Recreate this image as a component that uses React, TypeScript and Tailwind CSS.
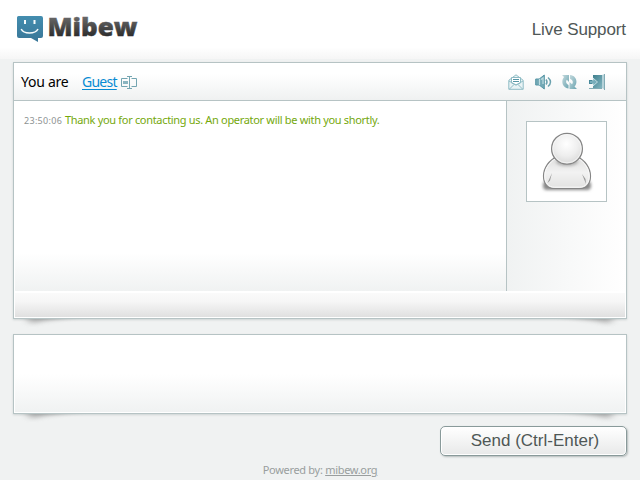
import React from "react";

function Logo() {
  return (
    <svg width="124" height="44" viewBox="0 -10 124 44" className="-mt-[10px] shrink-0">
      <defs>
        <linearGradient id="bubble" x2="0" y2="1">
          <stop stopColor="#438daf" />
          <stop offset="1" stopColor="#397697" />
        </linearGradient>
        <linearGradient id="wordmark" gradientUnits="userSpaceOnUse" x1="0" y1="2" x2="0" y2="22">
          <stop stopColor="#686868" />
          <stop offset="1" stopColor="#2b2b2b" />
        </linearGradient>
      </defs>
      <path d="M2.500 1H25Q27 1 27 3V21Q27 23 25 23H22V27L15 23H3Q1 23 1 21V2.500Q1 1 2.500 1Z" fill="url(#bubble)" />
      <path d="M9 5v4M18.500 5v4" stroke="#f7fbfc" strokeWidth="2" />
      <path d="M5.200 14Q7 18 13.500 18T22 14" fill="none" stroke="#f7fbfc" strokeWidth="1.500" />
      <text
        x="31.500"
        y="20.500"
        textLength="90"
        lengthAdjust="spacingAndGlyphs"
        fill="url(#wordmark)"
        stroke="url(#wordmark)"
        strokeWidth=".4"
        className="font-['Open_Sans','Noto_Sans',sans-serif] text-[24.5px] font-extrabold"
      >
        Mibew
      </text>
    </svg>
  );
}

function RenameIcon() {
  return (
    <svg width="16" height="14" viewBox="0 0 16 14" className="mt-[2px] ml-[4px] shrink-0" fill="none" stroke="#73a5b1">
      <path d="M6.500 2.500H.5v8h6M10.500 2.500h5v8h-5M6 .5h5M6 12.500h5M8.500 .5v12" />
      <path d="M2 6.500h5" stroke="#8ab5c0" strokeWidth="3" />
    </svg>
  );
}

function MailIcon() {
  return (
    <svg width="16" height="16" viewBox="0 0 16 16" fill="none" stroke="#8fbcc5">
      <path d="M.8 6.300L8 .8l7.200 5.500v9H.8z" fill="#e9f3f5" />
      <path d="M3.500 9V3.500h9V9L8 11z" fill="#fff" />
      <path d="M5 5.500h6M5 7.500h6" stroke="#5796a6" />
      <path d="M1 7l7 4 7-4M1.500 15L6 10.500M14.500 15L10 10.500" />
    </svg>
  );
}

function SoundIcon() {
  return (
    <svg width="17" height="16" viewBox="0 0 17 16" fill="none">
      <path d="M.7 5h3.500L9.300 1v14l-5.100-4H.7z" fill="#74a9b6" stroke="#5796a6" />
      <path d="M4.500 5v6M6 5.500l2-1.500v6" stroke="#c0dce1" strokeWidth="1.200" />
      <path d="M11 5.500q2 2.500 0 5M13 3.500q5 4.500 0 9" stroke="#6aa1ae" strokeWidth="1.500" />
    </svg>
  );
}

function RefreshIcon() {
  return (
    <svg width="15" height="16" viewBox="0 0 15 16" className="-ml-px mr-px">
      <defs>
        <linearGradient id="refresh" x2="1" y2="1">
          <stop stopColor="#c5dade" />
          <stop offset="1" stopColor="#6ba4b0" />
        </linearGradient>
      </defs>
      <path d="M0 1H7V8L4.800 5.800C3.500 7.500 4 9.800 6.500 11V14.500C.8 14 -1.500 7.500 2 3z" fill="url(#refresh)" />
      <path d="M8 1C14 1.500 16.500 8 12.500 12.500L15 15H7.500V8L10 10.200C11.500 8.500 11 6 8 4.700z" fill="url(#refresh)" />
    </svg>
  );
}

function ExitIcon() {
  return (
    <svg width="17" height="16" viewBox="0 0 17 16">
      <defs>
        <linearGradient id="door" x2="1" y2="1">
          <stop stopColor="#3f7f8d" />
          <stop offset="1" stopColor="#82b5c0" />
        </linearGradient>
      </defs>
      <path d="M4 1h9v13H4z" fill="url(#door)" />
      <path d="M13 1l3-1v16l-3-2z" fill="#b5d2d9" />
      <path d="M15.500 0v16M0 14.500h13" stroke="#82abb4" />
      <path d="M.5 6.500h3.500V4L8.500 8 4 12V9.500H.5z" fill="#78adba" stroke="#e5f3f5" strokeWidth=".7" />
      <path d="M0 6.500h3.500M0 9.500h3.500M.5 6v4" stroke="#48899a" />
    </svg>
  );
}

function Avatar() {
  return (
    <svg width="54" height="64" viewBox="0 0 54 64">
      <defs>
        <radialGradient id="head" cx=".48" cy=".35" r=".7">
          <stop stopColor="#fff" />
          <stop offset=".55" stopColor="#eee" />
          <stop offset="1" stopColor="#d6d6d5" />
        </radialGradient>
        <linearGradient id="body" x2="0" y2="1">
          <stop stopColor="#dededd" />
          <stop offset=".5" stopColor="#f2f2f2" />
          <stop offset="1" stopColor="#e2e2e1" />
        </linearGradient>
        <filter id="soft" x="-30%" y="-50%" width="160%" height="200%">
          <feGaussianBlur stdDeviation="1.500" />
        </filter>
      </defs>
      <rect x="3" y="50" width="48" height="9" rx="4" fill="#888" filter="url(#soft)" />
      <path d="M17 25.500C9 29 3.500 37 3.500 45c0 7.500 4 12.500 11 12.500h25c7 0 11-5 11-12.500 0-8-5.500-16-13.500-19.500z" fill="url(#body)" stroke="#858585" strokeWidth="1.200" />
      <path d="M16 27.500C9 31.500 4.800 38 4.800 45c0 6.500 3.500 11.200 9.700 11.200h25c6.200 0 9.700-4.700 9.700-11.200 0-7-4.700-14-11.200-17.500" fill="none" stroke="#fafafa" />
      <path d="M7.500 52l4.500-10-2 7.500zM46 53l-4-10 3.500 5z" fill="#999" />
      <ellipse cx="27" cy="31" rx="11" ry="4" fill="#999" opacity=".7" filter="url(#soft)" />
      <circle cx="27" cy="17.700" r="15.400" fill="url(#head)" stroke="#858585" strokeWidth="1.300" />
      <circle cx="27" cy="17.700" r="14.200" fill="none" stroke="#f8f8f8" opacity=".8" />
    </svg>
  );
}

function CornerShadow({ flip = false }: { flip?: boolean }) {
  return (
    <svg width="80" height="12" viewBox="0 0 80 12" className={flip ? "-scale-x-100" : ""}>
      <defs>
        <filter id="fold" x="-30%" y="-100%" width="160%" height="300%">
          <feGaussianBlur stdDeviation="4 2" />
        </filter>
      </defs>
      <path d="M12 -4H72L45 0Q28 2 18 5Z" fill="#777" opacity=".5" filter="url(#fold)" />
    </svg>
  );
}

function Panel({ className, children }: { className: string; children: React.ReactNode }) {
  return (
    <section className={`relative w-[614px] border border-[#b6c3c4] bg-white shadow-[0_1px_2px_#cdd3d3] ${className}`}>
      {children}
      <div className="absolute top-full -left-px mt-px flex w-[614px] justify-between">
        <CornerShadow />
        <CornerShadow flip />
      </div>
    </section>
  );
}

export default function App() {
  return (
    <main className="h-[480px] w-[640px] overflow-hidden bg-[#f0f2f2] font-['Noto_Sans','DejaVu_Sans',sans-serif]">
      <header className="flex h-[59px] justify-between bg-gradient-to-b from-white from-80% to-[#f6f6f6] pt-[15px] pr-[14px] pl-[16px]">
        <Logo />
        <h1 className="mt-[3px] font-['Liberation_Sans',sans-serif] text-[17px] leading-[24px] tracking-[-0.1px] text-[#4f5756]">Live Support</h1>
      </header>
      <div className="pt-[3px] pl-[13px]">
        <Panel className="h-[257px]">
          <div className="flex h-[38px] items-center border-b border-[#b6c3c4] bg-gradient-to-b from-white from-30% to-[#eff1f1] pr-[20px] pl-[7px] text-[14px] text-black">
            <span className="w-[61px] whitespace-nowrap tracking-[-0.25px]">You are</span>
            <a className="w-[35px] tracking-[-0.75px] whitespace-nowrap text-[#078bd3] underline underline-offset-2">Guest</a>
            <RenameIcon />
            <div className="ml-auto flex items-center gap-[11px]">
              <MailIcon />
              <SoundIcon />
              <RefreshIcon />
              <ExitIcon />
            </div>
          </div>
          <div className="flex h-[190px]">
            <div className="ml-px w-[491px] bg-gradient-to-b from-white from-80% to-[#f0f2f2] pt-[11px] pl-[9px] text-[11px] leading-[15px] whitespace-nowrap">
              <span className="inline-block w-[38px] text-[9px] tracking-[0.3px] text-[#8d9292]">23:50:06</span>
              <span className="ml-[3px] tracking-[-0.32px] text-[#75a80c]">Thank you for contacting us. An operator will be with you shortly.</span>
            </div>
            <aside className="flex flex-1 justify-center border-l border-[#b6c3c4] bg-gradient-to-r from-[#f0f2f2] to-white pt-[20px]">
              <div className="flex h-[81px] w-[81px] justify-center border border-[#b6c3c4] bg-white pt-[9px]">
                <Avatar />
              </div>
            </aside>
          </div>
          <div className="mx-px mt-[2px] h-[24px] bg-gradient-to-b from-[#fafafa] via-[#f6f6f6] via-35% to-[#e0e0e0]" />
        </Panel>
        <Panel className="mt-[15px] h-[80px] p-px">
          <div className="h-full bg-gradient-to-b from-white from-50% to-[#f0f2f2]" />
        </Panel>
        <button className="mt-[12px] ml-[427px] block h-[30px] w-[187px] rounded-[5px] border border-[#899a9a] bg-gradient-to-b from-white to-[#e8e9e9] pl-[3px] font-['Liberation_Sans',sans-serif] text-[17px] leading-[26px] whitespace-nowrap text-[#4f5756] shadow-[inset_0_0_0_1px_white,1px_1px_2px_#b4baba]">
          Send (Ctrl-Enter)
        </button>
      </div>
      <footer className="mt-[6px] text-center text-[11px] leading-[15px] tracking-[-0.3px] text-[#999e9e]">
        Powered by: <a className="underline">mibew.org</a>
      </footer>
    </main>
  );
}
